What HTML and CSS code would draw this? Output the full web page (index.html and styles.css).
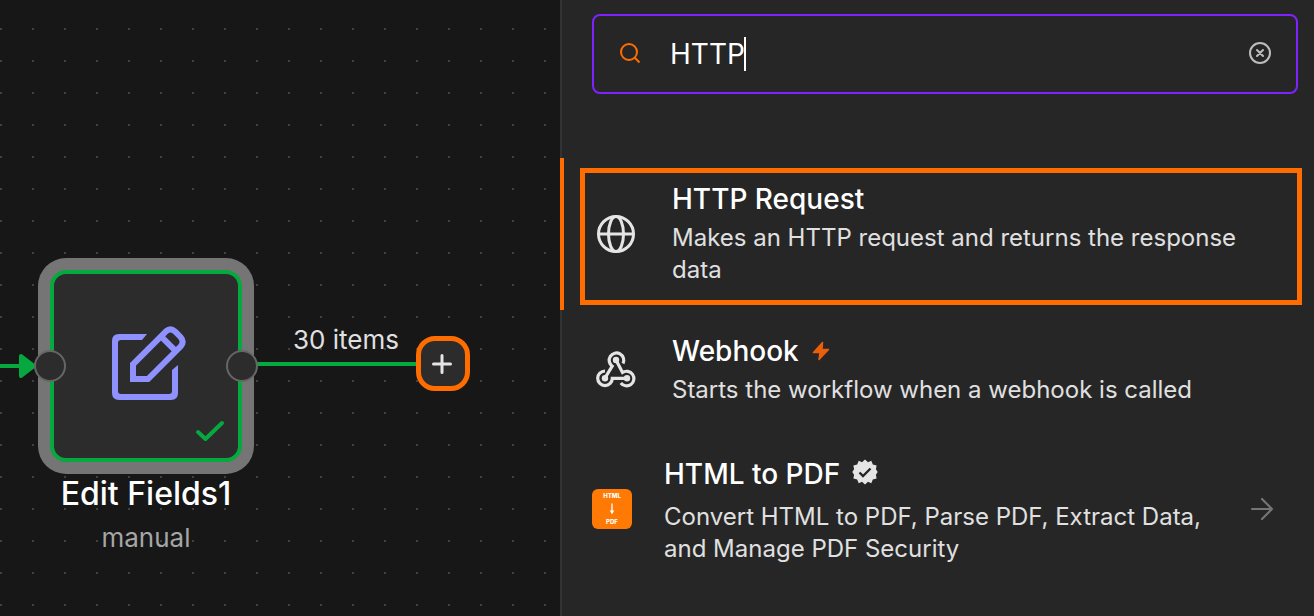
FILE: index.html
```html
<!DOCTYPE html>
<html lang="en">
<head>
<meta charset="utf-8">
<title>Workflow editor</title>
<meta name="viewport" content="width=device-width, initial-scale=1">
<link rel="stylesheet" href="styles.css">
</head>
<body>
<div class="app">
  <main class="canvas">
    <svg class="edge edge-in" viewBox="0 0 40 32" aria-hidden="true">
      <path d="M0 16H24" stroke="currentColor" stroke-width="4"/>
      <path d="M21 6L34 16L21 26Z" fill="currentColor" stroke="currentColor" stroke-width="4" stroke-linejoin="round"/>
    </svg>
    <div class="edge edge-out"></div>
    <span class="edge-label">30 items</span>
    <button class="add-node" type="button" aria-label="Add node">
      <svg viewBox="0 0 20 20" aria-hidden="true"><path d="M10 1.5V18.5M1.5 10H18.5" fill="none" stroke="currentColor" stroke-width="3" stroke-linecap="round"/></svg>
    </button>
    <section class="node">
      <div class="node-box">
        <svg class="node-icon" viewBox="0 0 80 80" aria-hidden="true">
          <path d="M41 8H13Q6 8 6 15V67Q6 74 13 74H65Q72 74 72 67V39L66 44V65Q66 68 63 68H15Q12 68 12 65V17Q12 14 15 14H36Z" fill="currentColor"/>
          <path d="M27 53V38.300L60.200 5.100Q64.500 1.500 69 5.500L74.500 11Q78.500 15.500 75 20L42 53Z M55 10.300L69.800 25.200" fill="none" stroke="currentColor" stroke-width="6"/>
        </svg>
        <svg class="node-check" viewBox="0 0 30 22" aria-hidden="true"><path d="M3 12L10.500 19L27 3" fill="none" stroke="currentColor" stroke-width="4" stroke-linecap="round" stroke-linejoin="round"/></svg>
        <span class="port port-in"></span>
        <span class="port port-out"></span>
      </div>
      <h2 class="node-name">Edit Fields1</h2>
      <p class="node-sub">manual</p>
    </section>
  </main>

  <aside class="panel">
    <div class="search">
      <svg class="search-icon" viewBox="0 0 22 22" aria-hidden="true"><path d="M10 2A8 8 0 1 0 10 18A8 8 0 1 0 10 2ZM15.800 15.800L20.500 20.500" fill="none" stroke="currentColor" stroke-width="2"/></svg>
      <div class="search-field">
        <input class="search-input" type="text" value="HTTP" aria-label="Search nodes">
        <span class="caret"></span>
      </div>
      <button class="clear" type="button" aria-label="Clear search">
        <svg viewBox="0 0 24 24" aria-hidden="true"><circle cx="12" cy="12" r="10" fill="none" stroke="currentColor" stroke-width="2"/><path d="M9 9L15 15M15 9L9 15" stroke="currentColor" stroke-width="2" stroke-linecap="round"/></svg>
      </button>
    </div>

    <ul class="results">
      <li class="result active">
        <svg class="result-icon" viewBox="0 0 40 40" aria-hidden="true"><g fill="none" stroke="currentColor" stroke-width="3"><circle cx="20" cy="20" r="17.500"/><ellipse cx="20" cy="20" rx="7.500" ry="17.500"/><path d="M2.500 20H37.500"/></g></svg>
        <div class="result-text">
          <h3 class="result-title">HTTP Request</h3>
          <p class="result-desc">Makes an HTTP request and returns the response data</p>
        </div>
      </li>
      <li class="result">
        <svg class="result-icon" viewBox="0 0 40 40" aria-hidden="true">
          <g fill="none" stroke="currentColor" stroke-width="3.200">
            <path d="M27 13.500A7.300 7.300 0 1 0 16.200 16.200L9 28"/>
            <path d="M9 21A7.300 7.300 0 1 0 16.300 28.300H31"/>
            <path d="M20 10L26.500 22.500A7.300 7.300 0 1 1 24.800 33"/>
          </g>
          <g fill="currentColor"><circle cx="20" cy="10" r="3.200"/><circle cx="9" cy="28.300" r="3.200"/><circle cx="31" cy="28.300" r="3.200"/></g>
        </svg>
        <div class="result-text">
          <h3 class="result-title">Webhook
            <svg class="bolt" viewBox="0 0 18 20" aria-hidden="true"><path d="M10.500 1.500L1.500 11.500H8L7 18.500L16.500 8.500H10Z" fill="currentColor" stroke="currentColor" stroke-width="1.500" stroke-linejoin="round"/></svg>
          </h3>
          <p class="result-desc">Starts the workflow when a webhook is called</p>
        </div>
      </li>
      <li class="result community">
        <div class="pdf-logo"><span>HTML</span>
          <svg viewBox="0 0 6 12" aria-hidden="true"><path d="M3 0.500V9" stroke="currentColor" stroke-width="1.300"/><path d="M0.800 7.500H5.200L3 11.500Z" fill="currentColor"/></svg>
          <span>PDF</span></div>
        <div class="result-text">
          <h3 class="result-title">HTML to PDF
            <svg class="verified" viewBox="0 0 26 26" aria-hidden="true"><path d="M13 .5L16 3.200L19.300 1.800L20.800 5.400L24.600 6.500L23.900 10.200L25.700 13L23.900 15.800L24.600 19.500L20.800 20.600L19.300 24.200L16 22.800L13 25.500L10 22.800L6.700 24.200L5.200 20.600L1.400 19.500L2.100 15.800L.3 13L2.100 10.200L1.400 6.500L5.200 5.400L6.700 1.800L10 3.200Z" fill="currentColor"/><path class="verified-mark" d="M7.500 13.500L11 17L18.500 9.500" fill="none" stroke-width="2.400"/></svg>
          </h3>
          <p class="result-desc">Convert HTML to PDF, Parse PDF, Extract Data, and Manage PDF Security</p>
        </div>
        <svg class="arrow" viewBox="0 0 24 24" aria-hidden="true"><path d="M2 12H22M12 2L22 12L12 22" fill="none" stroke="currentColor" stroke-width="2.200" stroke-linecap="round" stroke-linejoin="round"/></svg>
      </li>
    </ul>
  </aside>
</div>
</body>
</html>
```

FILE: styles.css
```css
* { box-sizing: border-box; }
body { margin: 0; background: #262626; color: #fff; font-family: Inter, "Liberation Sans", sans-serif; }
h2, h3, p, ul { margin: 0; padding: 0; }
ul { list-style: none; }
button { padding: 0; border: 0; background: none; cursor: pointer; }
svg { display: block; flex: none; }

.app { display: grid; grid-template-columns: 560px 1fr; min-height: 100vh; }

/* Canvas */
.canvas {
  position: relative;
  overflow: hidden;
  background: #171717 conic-gradient(from 270deg at 2px 2px, #404040 90deg, transparent 0) 0 28px / 32px 32px;
}
.edge { position: absolute; color: #06a83f; }
.edge-in { left: 0; top: 350px; width: 40px; height: 32px; }
.edge-out { left: 254px; top: 362px; width: 166px; height: 4px; background: #06a83f; }
.edge-label { position: absolute; left: 293px; top: 324px; font-size: 26px; line-height: 32px; color: #e0e0e0; }
.add-node {
  position: absolute; left: 416px; top: 336px;
  display: grid; place-items: center;
  width: 54px; height: 55px;
  border: 5px solid #ff6d00; border-radius: 19px;
  background: #2c2c2c; color: #e5e5e5;
}
.add-node svg { width: 20px; height: 20px; margin-right: 2px; }
.node { position: absolute; left: 38px; top: 258px; width: 216px; text-align: center; }
.node-box {
  position: relative;
  display: grid; place-items: center;
  margin: 12px; height: 192px;
  border: 4px solid #06a83f; border-radius: 16px;
  background: #2c2c2c;
  box-shadow: 0 0 0 12px #757575;
}
.node-icon { width: 80px; height: 80px; color: #8f91ff; }
.node-check { position: absolute; right: 13px; bottom: 16px; width: 30px; height: 22px; color: #06a83f; }
.port { position: absolute; top: 76px; width: 32px; height: 32px; border: 2px solid #666; border-radius: 50%; background: #2c2c2c; }
.port-in { left: -20px; }
.port-out { right: -20px; }
.node-name { font-size: 32px; line-height: 40px; font-weight: 500; white-space: nowrap; }
.node-sub { margin-top: 6px; font-size: 26px; line-height: 36px; color: #a6a6a6; }

/* Node search panel */
.panel { min-width: 0; border-left: 2px solid #333; background: #262626; }
.search {
  display: flex; align-items: center;
  height: 80px; margin: 14px 16px 64px 30px; padding: 0 24px;
  border: 2px solid #7e22ff; border-radius: 8px;
}
.search-icon { width: 24px; height: 22px; margin-bottom: 2px; color: #ff6d00; }
.search-field { display: flex; flex: 1; align-items: center; min-width: 0; margin-left: 28px; }
.search-input {
  width: 74px; padding: 0; border: 0; outline: 0; background: none;
  color: #fff; font: 28px/36px Inter, "Liberation Sans", sans-serif;
}
.caret { width: 2px; height: 34px; background: #fff; }
.clear { margin-bottom: 2px; color: #bdbdbd; }
.clear svg { width: 24px; height: 24px; }

.result { position: relative; display: flex; align-items: center; padding: 24px 56px 24px 34px; }
.result-icon { width: 40px; height: 40px; color: #e5e5e5; }
.result-text { flex: 1; min-width: 0; margin-left: 36px; }
.result-title { display: flex; align-items: center; gap: 12px; margin-bottom: 6px; font-size: 28px; line-height: 34px; font-weight: 500; }
.result-desc { font-size: 24px; line-height: 32px; color: #e0e0e0; }
.active::before { content: ""; position: absolute; inset: 0 auto 0 -2px; width: 4px; background: #ff6d00; }
.active::after { content: ""; position: absolute; inset: 10px 12px 5px 18px; border: 5px solid #ff6d00; }
.bolt { width: 20px; height: 20px; color: #ea5f0b; }
.community { padding: 27px 40px 24px 30px; }
.community .result-text { margin-left: 32px; }
.community .result-title { margin-bottom: 10px; }
.verified { width: 26px; height: 26px; margin-bottom: 4px; color: #e5e5e5; }
.verified-mark { stroke: #262626; }
.pdf-logo {
  display: flex; flex: none; flex-direction: column; align-items: center; justify-content: space-between;
  width: 40px; height: 40px; margin-bottom: 4px; padding: 3px 0;
  border-radius: 6px; background: #ff7a05;
  font-size: 6px; line-height: 8px; font-weight: 800;
}
.pdf-logo svg { width: 6px; height: 12px; }
.arrow { width: 24px; height: 24px; margin: 0 0 4px 32px; color: #757575; }
```
